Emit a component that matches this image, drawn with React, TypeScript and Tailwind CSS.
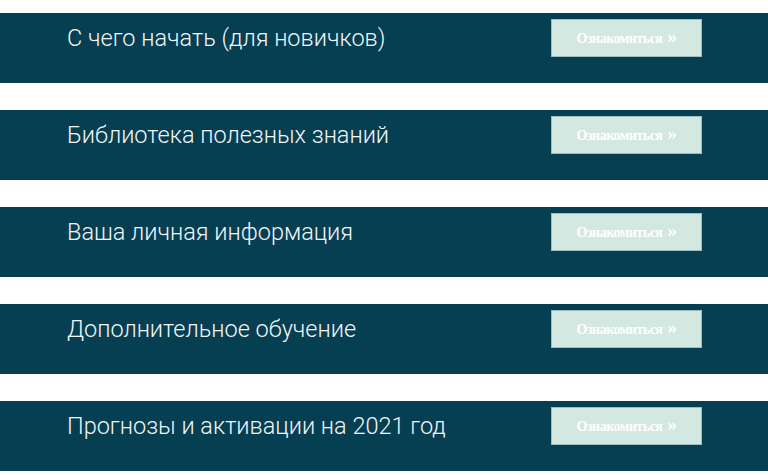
const items = [
  "С чего начать (для новичков)",
  "Библиотека полезных знаний",
  "Ваша личная информация",
  "Дополнительное обучение",
  "Прогнозы и активации на 2021 год",
];

const App = () => {
  return (
    <div className="w-full min-h-screen bg-white pt-[13px] flex flex-col gap-[27px]">
      {items.map((title, index) => (
        <div
          key={index}
          className="h-[70px] bg-[#063e52] flex items-start pl-[67px] pr-[66px]"
        >
          <p className="flex-1 pt-[11px] text-[23.5px] leading-[28px] font-light text-[#f2f6f7] font-['Roboto',sans-serif]">
            {title}
          </p>
          <button className="mt-[6px] w-[151px] h-[38px] bg-[#d3e8e1] border border-[#9dbcbc] flex items-center justify-center text-white font-bold text-[14px] tracking-[-0.5px] font-['Liberation_Serif',serif]">
            Ознакомиться
            <span className="ml-[5px] mb-[3px] text-[19px] leading-none">»</span>
          </button>
        </div>
      ))}
    </div>
  );
};

export default App;
